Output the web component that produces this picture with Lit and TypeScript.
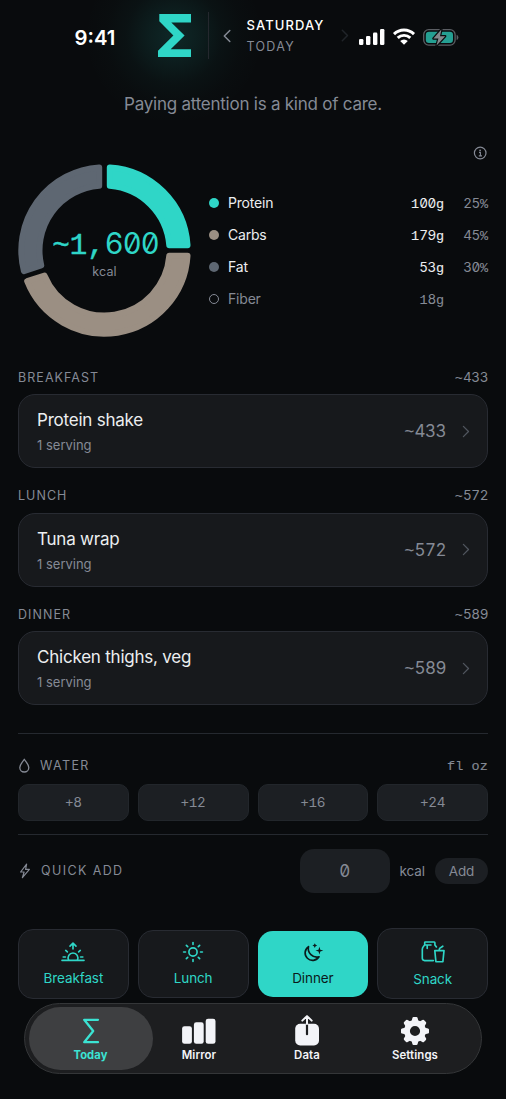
import { LitElement, html, css, svg } from 'lit';
import { customElement } from 'lit/decorators.js';
import { classMap } from 'lit/directives/class-map.js';

const TEAL = '#2fd6c7';

const figures = (value: string) =>
  value.split(/([^02-9]+)/).filter(Boolean).map((part) =>
    /^[02-9]+$/.test(part) ? part : html`<span class="slab">${part}</span>`);

const point = (r: number, a: number) => `${(r * Math.sin(a)).toFixed(2)} ${(-r * Math.cos(a)).toFixed(2)}`;

/** Ring segment between two fractions of the circle, with parallel gaps. */
const segment = (from: number, to: number) => {
  const outer = 83.2, inner = 65, gap = 5.3;
  const a = from * 2 * Math.PI, b = to * 2 * Math.PI;
  const o = Math.asin(gap / outer), i = Math.asin(gap / inner);
  const large = to - from > 0.5 ? 1 : 0;
  return `M${point(outer, a + o)}A${outer} ${outer} 0 ${large} 1 ${point(outer, b - o)}L${point(inner, b - i)}A${inner} ${inner} 0 ${large} 0 ${point(inner, a + i)}Z`;
};

const macros = [
  { name: 'Protein', grams: '100g', pct: '25%', color: TEAL, from: 0, to: 0.25 },
  { name: 'Carbs', grams: '179g', pct: '45%', color: '#9b8f83', from: 0.25, to: 0.7 },
  { name: 'Fat', grams: '53g', pct: '30%', color: '#5e6772', from: 0.7, to: 1 },
];

const meals = [
  { slot: 'BREAKFAST', name: 'Protein shake', kcal: '~433' },
  { slot: 'LUNCH', name: 'Tuna wrap', kcal: '~572' },
  { slot: 'DINNER', name: 'Chicken thighs, veg', kcal: '~589' },
];

const rays = (angles: number[], r1: number, r2: number) =>
  angles.map((d) => {
    const a = (d * Math.PI) / 180;
    return svg`<path d="M${point(r1, a)}L${point(r2, a)}"/>`;
  });

const slotIcons = {
  breakfast: html`<svg class="line" width="24" height="22" viewBox="-12 -16 24 22">
    <path d="M-11 3.4H11M-4.3 3.2A4.9 4.9 0 1 1 4.3 3.2M0 -8V-13.6M-3 -10.9L0 -13.9L3 -10.9"/>
    ${rays([-90, -48, 48, 90], 7.6, 9.8)}</svg>`,
  lunch: html`<svg class="line" width="22" height="22" viewBox="-11 -11 22 22">
    <circle r="4.1"/>${rays([0, 45, 90, 135, 180, 225, 270, 315], 7.5, 9.4)}</svg>`,
  dinner: html`<svg class="line" width="22" height="22" viewBox="0 0 22 22">
    <path d="M6.5 4.6A7.5 7.5 0 1 0 17 14.8A8.6 8.6 0 0 1 6.5 4.6Z"/>
    <path stroke="none" fill="currentColor" d="M12.8 1.2Q13.2 3.2 15.2 3.6Q13.2 4 12.8 6Q12.4 4 10.4 3.6Q12.4 3.2 12.8 1.2ZM17.4 4.7L18.3 7.7L21.3 8.6L18.3 9.5L17.4 12.5L16.5 9.5L13.5 8.6L16.5 7.7Z"/></svg>`,
  snack: html`<svg class="line" width="24" height="22" viewBox="0 0 24 22">
    <path d="M12.4 19.6H3.6Q1.3 19.6 1.3 17.3V8.3Q1.3 6.6 2.6 5.2L3.7 4V1.7Q3.7 1 4.4 1H13.2Q13.9 1 13.9 1.7V4L15.4 6M3.7 4H10M6.2 4.4V7.5"/>
    <path d="M13.8 9.6H23L21.9 20.7H14.9ZM18 9.4L18.6 7.4L21.8 5.2"/></svg>`,
};

const slots = [
  { id: 'breakfast', label: 'Breakfast', icon: slotIcons.breakfast },
  { id: 'lunch', label: 'Lunch', icon: slotIcons.lunch },
  { id: 'dinner', label: 'Dinner', icon: slotIcons.dinner },
  { id: 'snack', label: 'Snack', icon: slotIcons.snack },
];

const tabs = [
  { label: 'Today', icon: html`<svg width="30" height="30" viewBox="0 0 30 30"><path fill="none" stroke="#3be3d3" stroke-width="2.3" stroke-linecap="round" stroke-linejoin="round" d="M22 3.8H8.2L17.2 15L8.2 26.2H22"/></svg>` },
  { label: 'Mirror', icon: html`<svg width="36" height="30" viewBox="0 0 36 30" fill="#f3f4f8"><rect x="1.1" y="10.2" width="9.8" height="17.6" rx="2.4"/><rect x="12.9" y="6.3" width="9.8" height="21.5" rx="2.4"/><rect x="24.7" y="2.7" width="9.8" height="25.1" rx="2.4"/></svg>` },
  { label: 'Data', icon: html`<svg width="26" height="32" viewBox="0 0 26 32"><rect x="1.2" y="7.8" width="23.8" height="21.6" rx="5" fill="#f3f4f8"/><path d="M8.6 6.2L13 1.8L17.4 6.2" fill="none" stroke="#1d1e20" stroke-width="4"/><path d="M13 8.6V18.2" stroke="#1d1e20" stroke-width="2.2" stroke-linecap="round"/><path d="M13 8V.8M8.3 4.6L13 .1L17.7 4.6" fill="none" stroke="#f3f4f8" stroke-width="2" stroke-linecap="round" stroke-linejoin="round"/></svg>` },
  { label: 'Settings', icon: html`<svg width="30" height="30" viewBox="-15 -15 30 30"><g fill="#f3f4f8">${[0, 45, 90, 135, 180, 225, 270, 315].map((d) => svg`<path transform="rotate(${d})" d="M-3.6 -9L-2.6 -13Q-2.4 -14 -1.4 -14H1.4Q2.4 -14 2.6 -13L3.6 -9Z"/>`)}</g><circle r="8" fill="none" stroke="#f3f4f8" stroke-width="5.8"/></svg>` },
];

@customElement('app-root')
export class AppRoot extends LitElement {
  static styles = css`
    :host { display: block; width: 506px; height: 1099px; overflow: hidden; background: #090b0d; color: #eceef0; font-family: Inter, "Liberation Sans", sans-serif; font-size: 14px; -webkit-font-smoothing: antialiased; }
    * { box-sizing: border-box; }
    svg { display: block; flex: none; overflow: visible; }
    .line { fill: none; stroke: currentColor; stroke-width: 1.5; stroke-linecap: round; stroke-linejoin: round; }
    .muted { color: #858a95; }
    .mono { font-size: 13.5px; letter-spacing: -0.03em; font-feature-settings: "tnum", "zero"; }
    .slab { font-family: "Liberation Mono", monospace; letter-spacing: 0; line-height: 0; -webkit-text-stroke: 0.1px currentColor; }

    .header { height: 120px; margin-bottom: -49px; padding: 0 0 49px 74.5px; display: flex; align-items: center; background: radial-gradient(circle at 174px 36px, rgba(47,214,199,.14) 0, rgba(47,214,199,.095) 24px, rgba(47,214,199,.035) 48px, rgba(47,214,199,.012) 68px, transparent 90px) no-repeat; }
    .clock { width: 83.5px; padding-top: 4px; font-size: 20.3px; font-weight: 600; color: #fff; }
    .rule { width: 1px; height: 47px; background: #24282e; margin-left: 17px; }
    .prev { margin-left: 15px; color: #858a95; }
    .date { margin-left: 16.5px; width: 94px; font-size: 13px; letter-spacing: 1.1px; line-height: 21px; }
    .date .day { font-weight: 500; color: #fff; }
    .date .sub { font-size: 12.5px; letter-spacing: 1.3px; }
    .next { color: #202429; margin-left: 1px; }
    .signal { margin: 3px 0 0 11.5px; }
    .wifi { margin: 2.5px 0 0 8px; }
    .battery { margin: 3px 0 0 8px; }

    .message { height: 22px; line-height: 22px; margin-top: 22px; text-align: center; font-size: 17px; letter-spacing: -.24px; }
    .body { padding: 0 18px; }
    .info { display: flex; justify-content: flex-end; margin-top: 31px; }
    .summary { display: flex; align-items: flex-start; margin-top: 3.4px; }
    .ring { display: grid; width: 173px; height: 173px; }
    .ring > * { grid-area: 1 / 1; }
    .total { display: flex; flex-direction: column; align-items: center; padding-top: 62.6px; }
    .total .big { font-size: 29.2px; line-height: 34px; color: #2fd6c7; white-space: nowrap; margin-left: 2px; }
    .total .big .slab { -webkit-text-stroke-width: .5px; }
    .total .unit { font-size: 12.5px; line-height: 22px; letter-spacing: .1px; }
    .legend { flex: 1; margin: 22.6px 0 0 18px; }
    .macro { display: flex; align-items: center; height: 32px; letter-spacing: -.2px; }
    .dot { flex: none; width: 10px; height: 10px; border-radius: 50%; margin: 0 9px 0 0; }
    .hollow { border: 1.5px solid #858a95; }
    .grams { margin-left: auto; }
    .pct { width: 44px; text-align: right; }
    .macro .mono { letter-spacing: -.03em; }

    .meals { margin-top: 24.6px; }
    .mealhead { display: flex; justify-content: space-between; height: 32.5px; line-height: 31px; font-size: 12.5px; letter-spacing: 1.05px; }
    .card { display: flex; align-items: center; height: 74px; margin-bottom: 12px; padding: 0 18px; border: 1.3px solid #282b32; border-radius: 17px; background: #17191c; }
    .what { flex: 1; line-height: 25px; padding-top: 3.4px; }
    .name { font-size: 17px; letter-spacing: -.22px; }
    .servings { font-size: 13px; }
    .kcal { font-size: 17px; margin-right: 16.5px; }
    .chev { color: #50555e; margin-right: .5px; stroke-width: 1.3; }

    .sep { height: 1px; background: #25292f; }
    .meals + .sep { margin-top: 27.5px; }
    .bar { display: flex; align-items: center; font-size: 12.5px; letter-spacing: 1.4px; }
    .water { height: 34px; margin: 15px 0 1px; }
    .label { margin-left: 10px; }
    .end { margin-left: auto; }
    .unitmono { font-family: "Liberation Mono", monospace; font-size: 13.5px; letter-spacing: .1px; padding-top: 1px; -webkit-text-stroke: .1px currentColor; }
    .quarters { display: grid; grid-template-columns: repeat(4, 1fr); gap: 9px; }
    .pill { height: 37px; border-radius: 10px; background: #1c1f23; border: 1px solid #22262b; display: flex; align-items: center; justify-content: center; }
    .quarters + .sep { margin-top: 13px; }
    .quick { height: 44px; margin-top: 14px; }
    .amount { width: 90px; height: 44px; border-radius: 14px; background: #1c1f23; display: flex; align-items: center; justify-content: center; font-size: 17px; }
    .small { font-size: 13.5px; letter-spacing: -.1px; margin-left: 10px; }
    .add { width: 53px; height: 26.5px; line-height: 26.5px; border-radius: 14px; text-align: center; background: #1c1f23; }

    .slots { align-items: center; height: 71px; margin-top: 35.5px; }
    .slot { height: 68.5px; border-radius: 15px; border: 1.3px solid #282b32; background: #17191c; color: #2fd6c7; display: flex; flex-direction: column; align-items: center; justify-content: center; padding-top: 1.5px; font-size: 13.5px; line-height: 20px; letter-spacing: -.1px; }
    .slot .line { stroke-width: 1.65; }
    .slot.breakfast { height: 69.5px; gap: 5.5px; }
    .slot.lunch { gap: 4.5px; }
    .slot.dinner { height: 66px; border: 0; background: #2fd6c7; color: #0b1a1b; gap: 4px; }
    .slot.snack { height: 71px; gap: 6px; }

    .tabs { display: grid; grid-template-columns: 124px repeat(3, 108px); margin: 3.2px 24px 0; height: 71.6px; padding: 3.5px; border: 1.3px solid #343638; border-radius: 36px; background: linear-gradient(90deg, transparent 236px, #17574f 242px, #17574f 334px, transparent 340px) 0 -1px / 100% 1.5px no-repeat border-box, #1d1e20; }
    .tab { display: flex; flex-direction: column; align-items: center; height: 63px; border-radius: 32px; font-size: 11.4px; font-weight: 600; letter-spacing: .1px; color: #f3f4f8; }
    .tab svg { margin-top: 8.5px; }
    .tab .art { height: 40px; display: flex; align-items: flex-start; }
    .tab .cap { line-height: 16px; }
    .tab:not(.active) { margin-left: -7.5px; margin-right: 7.5px; }
    .tab.active { background: #3e3f41; color: #3be3d3; font-weight: 700; font-size: 11.2px; }
  `;

  render() {
    return html`
      <header class="header">
        <div class="clock">9:41</div>
        <svg width="33" height="43" viewBox="0 0 33 43"><path fill="#2fd6c7" d="M1.3 0H33V8.5H13.3L26.6 21.5L12.7 35.3H33V43H0V36.7L15.4 21.4L1.3 7.2Z"/></svg>
        <div class="rule"></div>
        <svg class="line prev" width="6" height="12" viewBox="0 0 6 12"><path d="M5.8 .5L.3 6L5.8 11.5"/></svg>
        <div class="date"><div class="day">SATURDAY</div><div class="sub muted">TODAY</div></div>
        <svg class="line next" width="6" height="11" viewBox="0 0 6 11"><path d="M.3 .3L5.5 5.5L.3 10.7"/></svg>
        <svg class="signal" width="26" height="16" viewBox="0 0 26 16" fill="#fff"><rect x="0" y="10" width="4.4" height="6" rx="1.3"/><rect x="7" y="7" width="4.4" height="9" rx="1.3"/><rect x="14" y="3.6" width="4.4" height="12.4" rx="1.3"/><rect x="21" y="0" width="4.4" height="16" rx="1.3"/></svg>
        <svg class="wifi" width="22" height="16" viewBox="0 0 22 16"><g fill="none" stroke="#fff" stroke-width="2.9"><path d="M1 5.1A14.2 14.2 0 0 1 21 5.1"/><path d="M4.7 8.9A9 9 0 0 1 17.3 8.9"/></g><path fill="#fff" d="M7.2 12A5.4 5.4 0 0 1 14.8 12L11 15.8Z"/></svg>
        <svg class="battery" width="36" height="17" viewBox="0 0 36 17"><rect x=".7" y=".7" width="31.4" height="15.4" rx="5" fill="none" stroke="#5b5e63" stroke-width="1.3"/><rect x="2.8" y="2.8" width="27.2" height="11.2" rx="3.2" fill="#259f92"/><path d="M33.6 5.7Q35.4 6.3 35.4 8.4Q35.4 10.5 33.6 11.1Z" fill="#5b5e63"/><path d="M18.4 .4L10.4 9.5H15.4L13.5 16.6L22.2 7.2H17Z" fill="#85888c" stroke="#0b0d0f" stroke-width="2.4" paint-order="stroke" stroke-linejoin="round"/></svg>
      </header>
      <div class="message muted">Paying attention is a kind of care.</div>
      <main class="body">
        <div class="info muted"><svg width="15" height="15" viewBox="0 0 15 15"><circle cx="7.2" cy="7" r="5.8" fill="none" stroke="currentColor" stroke-width="1.2"/><circle cx="7.1" cy="4.3" r=".9" fill="currentColor"/><path d="M6 6.4H7.4V9.8M5.8 9.9H9" fill="none" stroke="currentColor" stroke-width="1.1"/></svg></div>
        <section class="summary">
          <div class="ring">
            <svg width="173" height="173" viewBox="-86.5 -86.5 173 173">
              ${macros.map((m) => svg`<path d=${segment(m.from, m.to)} fill=${m.color} stroke=${m.color} stroke-width="6" stroke-linejoin="round"/>`)}
            </svg>
            <div class="total"><div class="mono big">${figures('~1,600')}</div><div class="unit muted">kcal</div></div>
          </div>
          <div class="legend">
            ${macros.map((m) => html`<div class="macro"><span class="dot" style="background:${m.color}"></span>${m.name}<span class="mono grams">${figures(m.grams)}</span><span class="mono pct muted">${figures(m.pct)}</span></div>`)}
            <div class="macro muted"><span class="dot hollow"></span>Fiber<span class="mono grams">${figures('18g')}</span><span class="pct"></span></div>
          </div>
        </section>
        <section class="meals">
          ${meals.map((m) => html`
            <div class="mealhead muted"><span>${m.slot}</span><span class="mono">${figures(m.kcal)}</span></div>
            <div class="card">
              <div class="what"><div class="name">${m.name}</div><div class="servings muted">1 serving</div></div>
              <span class="mono kcal muted">${figures(m.kcal)}</span>
              <svg class="line chev" width="6" height="11" viewBox="0 0 6 11"><path d="M.4 .4L5.5 5.5L.4 10.6"/></svg>
            </div>`)}
        </section>
        <div class="sep"></div>
        <div class="bar water muted">
          <svg class="line" width="12" height="15" viewBox="0 0 12 15"><path stroke-width="1.3" d="M6.3 1.2C5 3.6 1.8 6.4 1.8 9.5A4.5 4.5 0 0 0 10.8 9.5C10.8 6.4 7.6 3.6 6.3 1.2Z"/></svg>
          <span class="label">WATER</span><span class="end unitmono">fl oz</span>
        </div>
        <div class="quarters">
          ${['+8', '+12', '+16', '+24'].map((v) => html`<div class="pill mono muted"><span>${figures(v)}</span></div>`)}
        </div>
        <div class="sep"></div>
        <div class="bar quick muted">
          <svg class="line" width="13" height="16" viewBox="0 0 13 16"><path stroke-width="1.2" d="M8.6 1.2L2.6 9H6.1L4.4 14.6L11.4 6.4H7.6Z"/></svg>
          <span class="label">QUICK ADD</span>
          <div class="amount mono end">0</div><span class="small">kcal</span><span class="small add">Add</span>
        </div>
        <div class="quarters slots">
          ${slots.map((s) => html`<div class=${classMap({ slot: true, [s.id]: true })}>${s.icon}<span>${s.label}</span></div>`)}
        </div>
      </main>
      <nav class="tabs">
        ${tabs.map((t, i) => html`<div class=${classMap({ tab: true, active: i === 0 })}><div class="art">${t.icon}</div><div class="cap">${t.label}</div></div>`)}
      </nav>`;
  }
}
